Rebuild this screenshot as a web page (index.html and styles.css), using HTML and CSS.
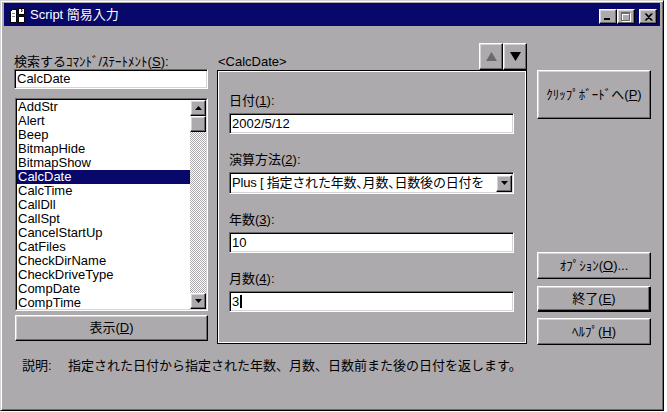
FILE: index.html
```html
<!DOCTYPE html>
<html lang="ja">
<head>
<meta charset="utf-8">
<title>Script 簡易入力</title>
<link rel="stylesheet" href="styles.css">
</head>
<body>
<div class="window">
  <div class="titlebar">
    <svg class="app-icon" width="17" height="17" viewBox="0 0 17 17">
      <path d="M1.5 4.5 L3.5 2.5 L7.5 2.5 L7.5 15.5 L1.5 15.5 Z" fill="#fff" stroke="#000"/>
      <path d="M3 6.5 H6 M3 9.5 H6" stroke="#8a878a"/>
      <path d="M9.5 1.5 H15.5 V7.5 H9.5 Z" fill="#fff" stroke="#000"/>
      <path d="M12 1.5 Q14 3 12.5 5" fill="none" stroke="#000"/>
      <path d="M9.5 9.5 H15.5 V15.5 H9.5 Z" fill="#fff" stroke="#000"/>
    </svg>
    <span class="title">Script 簡易入力</span>
    <div class="ctrls">
      <div class="btn tbtn"><svg width="8" height="9" viewBox="0 0 8 9"><rect x="0" y="6" width="6" height="2" fill="#000"/></svg></div>
      <div class="btn tbtn"><svg width="10" height="10" viewBox="0 0 10 10"><path d="M1.5 1.5 H9.5 V9.5 H1.5 Z M1.5 2.5 H9.5" fill="none" stroke="#fff"/><path d="M0.5 0.5 H8.5 V8.5 H0.5 Z M0.5 1.5 H8.5" fill="none" stroke="#6b696b"/></svg></div>
      <div class="btn tbtn close"><svg width="9" height="8" viewBox="0 0 9 8"><path d="M1 0.5 L7.5 7.5 M2 0.5 L8.5 7.5 M7.5 0.5 L1 7.5 M8.5 0.5 L2 7.5" stroke="#000" stroke-width="1.1"/></svg></div>
    </div>
  </div>

  <div class="main">
    <div class="col-left">
      <div class="lbl">検索するｺﾏﾝﾄﾞ/ｽﾃｰﾄﾒﾝﾄ(<u>S</u>):</div>
      <div class="field search">CalcDate</div>
      <div class="listbox">
        <div class="listinner">
          <div class="items">
            <div class="item">AddStr</div>
            <div class="item">Alert</div>
            <div class="item">Beep</div>
            <div class="item">BitmapHide</div>
            <div class="item">BitmapShow</div>
            <div class="item sel">CalcDate</div>
            <div class="item">CalcTime</div>
            <div class="item">CallDll</div>
            <div class="item">CallSpt</div>
            <div class="item">CancelStartUp</div>
            <div class="item">CatFiles</div>
            <div class="item">CheckDirName</div>
            <div class="item">CheckDriveType</div>
            <div class="item">CompDate</div>
            <div class="item">CompTime</div>
          </div>
          <div class="sb">
            <div class="btn sbbtn"><svg width="7" height="4" viewBox="0 0 7 4"><polygon points="3.5,0 7,4 0,4" fill="#000"/></svg></div>
            <div class="btn sbbtn"></div>
            <div class="track"></div>
            <div class="btn sbbtn"><svg width="7" height="4" viewBox="0 0 7 4"><polygon points="0,0 7,0 3.5,4" fill="#000"/></svg></div>
          </div>
        </div>
      </div>
      <div class="btn show-btn">表示(<u>D</u>)</div>
    </div>

    <div class="col-mid">
      <div class="midtop">
        <span class="cmdname">&lt;CalcDate&gt;</span>
        <div class="nav">
          <div class="btn navbtn"><svg width="11" height="9" viewBox="0 0 11 9"><polygon points="5.5,0 11,9 0,9" fill="#6b696b"/></svg></div>
          <div class="btn navbtn"><svg width="11" height="9" viewBox="0 0 11 9"><polygon points="0,0 11,0 5.5,9" fill="#000"/></svg></div>
        </div>
      </div>
      <div class="panel">
        <div class="group">
          <div class="lbl">日付(<u>1</u>):</div>
          <div class="field">2002/5/12</div>
        </div>
        <div class="group">
          <div class="lbl">演算方法(<u>2</u>):</div>
          <div class="field combo">
            <span class="combotext">Plus [ 指定された年数、月数、日数後の日付を</span>
            <div class="btn dropbtn"><svg width="7" height="4" viewBox="0 0 7 4"><polygon points="0,0 7,0 3.5,4" fill="#000"/></svg></div>
          </div>
        </div>
        <div class="group">
          <div class="lbl">年数(<u>3</u>):</div>
          <div class="field">10</div>
        </div>
        <div class="group">
          <div class="lbl">月数(<u>4</u>):</div>
          <div class="field">3<span class="caret"></span></div>
        </div>
      </div>
    </div>

    <div class="col-right">
      <div class="btn clip-btn">ｸﾘｯﾌﾟﾎﾞｰﾄﾞへ(<u>P</u>)</div>
      <div class="btn rbtn opt-btn">ｵﾌﾟｼｮﾝ(<u>O</u>)...</div>
      <div class="btn rbtn def-btn">終了(<u>E</u>)</div>
      <div class="btn rbtn help-btn">ﾍﾙﾌﾟ(<u>H</u>)</div>
    </div>
  </div>

  <div class="desc">
    <span class="desc-label">説明:</span>
    <span>指定された日付から指定された年数、月数、日数前また後の日付を返します。</span>
  </div>
</div>
</body>
</html>
```

FILE: styles.css
```css
* { box-sizing: border-box; }

body {
  margin: 0;
  background: #fff;
  font-family: "Liberation Sans", "Noto Sans CJK JP", sans-serif;
  font-size: 13px;
  color: #000;
}

u { text-decoration: underline; text-underline-offset: 1px; }

.window {
  width: 664px;
  height: 411px;
  background: #adaaad;
  border: 1px solid;
  border-color: #d6d3d6 #000 #000 #d6d3d6;
  box-shadow: inset 1px 1px 0 #fff, inset -1px -1px 0 #6b696b;
  padding: 2px 3px 3px 3px;
  display: flex;
  flex-direction: column;
}

/* title bar */
.titlebar {
  height: 23px;
  background: #08086b;
  color: #fff;
  display: flex;
  align-items: center;
  flex-shrink: 0;
}
.app-icon { margin-left: 5px; margin-top: 1px; }
.title { margin-left: 4px; font-size: 13px; line-height: 14px; }
.ctrls {
  margin-left: auto;
  margin-right: 3px;
  align-self: flex-end;
  margin-bottom: 2px;
  display: flex;
}
.tbtn { width: 18px; height: 15px; }
.close { margin-left: 4px; }

/* generic raised button */
.btn {
  background: #adaaad;
  border: 1px solid;
  border-color: #fff #000 #000 #fff;
  box-shadow: inset -1px -1px 0 #6b696b, inset 1px 1px 0 #d6d3d6;
  display: flex;
  align-items: center;
  justify-content: center;
  line-height: 14px;
}

/* sunken field */
.field {
  height: 21px;
  background: #fff;
  border: 1px solid;
  border-color: #6b696b #fff #fff #6b696b;
  box-shadow: inset 1px 1px 0 #000, inset -1px -1px 0 #d6d3d6;
  padding: 0 2px;
  display: flex;
  align-items: center;
  line-height: 14px;
  white-space: nowrap;
  overflow: hidden;
}

.lbl { line-height: 14px; white-space: nowrap; }

.main {
  display: flex;
  height: 320px;
  flex-shrink: 0;
}

/* left column */
.col-left {
  width: 194px;
  margin-left: 10px;
  padding-top: 29px;
  display: flex;
  flex-direction: column;
}
.search { height: 20px; }
.listbox {
  margin-top: 9px;
  margin-left: 1px;
  width: 193px;
  height: 213px;
  border: 1px solid;
  border-color: #6b696b #fff #fff #6b696b;
}
.listinner {
  height: 100%;
  border: 1px solid;
  border-color: #000 #d6d3d6 #d6d3d6 #000;
  background: #fff;
  display: flex;
}
.items { flex: 1; overflow: hidden; }
.item { height: 14px; line-height: 14px; padding-left: 1px; white-space: nowrap; }
.item.sel { background: #08086b; color: #fff; }
.sb { width: 16px; display: flex; flex-direction: column; }
.sbbtn { height: 16px; flex-shrink: 0; }
.track {
  flex: 1;
  background-image: conic-gradient(#fff 25%, #adaaad 0 50%, #fff 0 75%, #adaaad 0);
  background-size: 2px 2px;
}
.show-btn {
  margin-top: 4px;
  margin-left: 1px;
  width: 193px;
  height: 26px;
}

/* middle column */
.col-mid {
  width: 310px;
  margin-left: 9px;
  padding-top: 17px;
  display: flex;
  flex-direction: column;
}
.midtop {
  height: 27px;
  display: flex;
  align-items: flex-end;
}
.cmdname { margin-left: 1px; margin-bottom: 1px; line-height: 14px; }
.nav { margin-left: auto; display: flex; height: 27px; }
.navbtn { width: 24px; height: 27px; }
.panel {
  height: 274px;
  border: 1px solid #000;
  box-shadow: inset 1px 1px 0 #fff, inset -1px -1px 0 #fff;
  padding: 23px 12px 0 11px;
  display: flex;
  flex-direction: column;
  gap: 19px;
}
.group .lbl { margin-bottom: 5px; }
.combo { height: 22px; padding: 0 1px 0 2px; }
.combotext {
  flex: 1;
  overflow: hidden;
  white-space: nowrap;
  font-feature-settings: "halt";
  letter-spacing: -0.2px;
}
.dropbtn { width: 16px; height: 17px; flex-shrink: 0; }
.caret {
  display: inline-block;
  width: 2px;
  height: 13px;
  background: #000;
  margin-left: 1px;
}

/* right column */
.col-right {
  width: 114px;
  margin-left: 10px;
  padding-top: 44px;
  display: flex;
  flex-direction: column;
}
.clip-btn { height: 49px; }
.rbtn { height: 27px; }
.opt-btn { margin-top: 133px; }
.def-btn {
  margin-top: 7px;
  height: 26px;
  box-shadow: inset -1px -1px 0 #000, inset -2px -2px 0 #6b696b, inset 1px 1px 0 #d6d3d6;
}
.help-btn { margin-top: 6px; }

/* description */
.desc {
  margin-top: 13px;
  padding-left: 18px;
  line-height: 14px;
  display: flex;
  white-space: nowrap;
}
.desc-label { width: 46px; }
```
